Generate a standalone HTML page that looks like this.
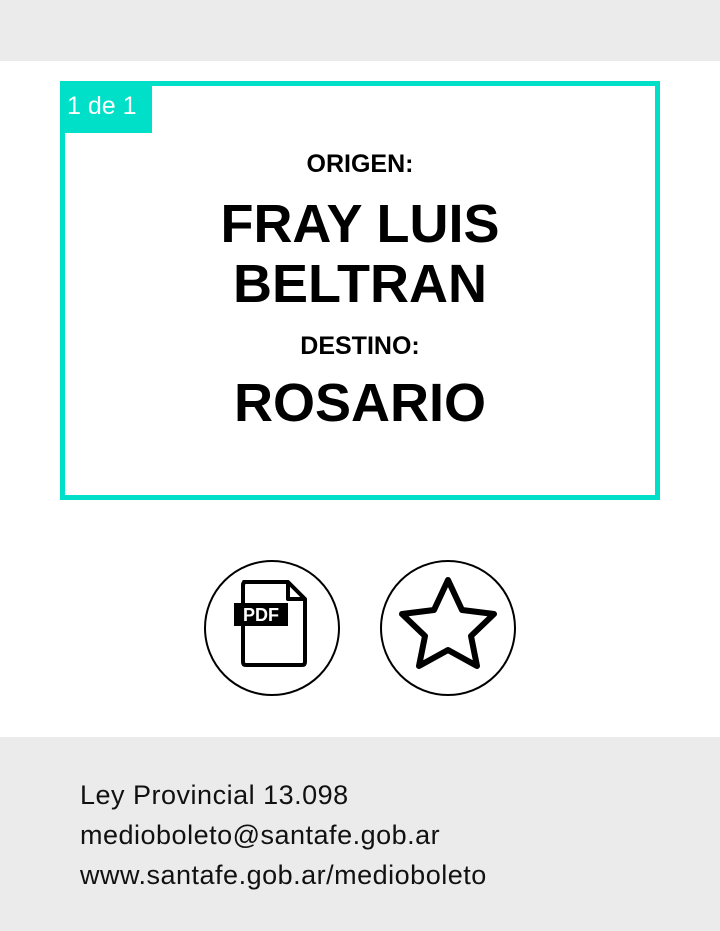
<!DOCTYPE html>
<html><head><style>
body{margin:0;width:720px;height:931px;background:#fff;font-family:"Liberation Sans",Arial,sans-serif;position:relative;overflow:hidden}
.top{position:absolute;left:0;top:0;width:720px;height:61px;background:#ebebeb}
.box{position:absolute;left:60px;top:81px;width:590px;height:409px;border:5px solid #00e0c8}
.badge{position:absolute;left:60px;top:81px;width:92px;height:52px;background:#00e0c8;color:#fff;font-size:25px;line-height:50px;text-indent:7px}
.t{position:absolute;left:0;width:720px;text-align:center;font-weight:bold;color:#000}
.foot{position:absolute;left:0;top:737px;width:720px;height:194px;background:#ebebeb}
.f{position:absolute;left:80px;font-size:27px;letter-spacing:0.5px;color:#111}
</style></head><body>
<div class="top"></div>
<div class="box"></div>
<div class="badge">1 de 1</div>
<div class="t" style="top:150px;font-size:25px">ORIGEN:</div>
<div class="t" style="top:194px;font-size:54px;line-height:60px">FRAY LUIS<br>BELTRAN</div>
<div class="t" style="top:332px;font-size:25px">DESTINO:</div>
<div class="t" style="top:373px;font-size:54px;line-height:60px">ROSARIO</div>
<svg style="position:absolute;left:0;top:0" width="720" height="931">
<circle cx="272" cy="628" r="67" fill="none" stroke="#000" stroke-width="2"/>
<circle cx="448" cy="628" r="67" fill="none" stroke="#000" stroke-width="2"/>
<path d="M244 582 H288 L305 599 V662 Q305 665 302 665 H246 Q243 665 243 662 V585 Q243 582 246 582 Z M288 582 V599 H305" fill="none" stroke="#000" stroke-width="4" stroke-linejoin="round"/>
<rect x="234" y="603" width="54" height="23" fill="#000"/>
<text x="261" y="621" font-family="Liberation Sans" font-weight="bold" font-size="18" fill="#fff" text-anchor="middle">PDF</text>
<path d="M448 580 L462 610 L494 614 L471 636 L477 666 L448 650 L419 666 L425 636 L402 614 L434 610 Z" fill="none" stroke="#000" stroke-width="6" stroke-linejoin="round"/>
</svg>
<div class="foot"></div>
<div class="f" style="top:780px">Ley Provincial 13.098</div>
<div class="f" style="top:820px">medioboleto@santafe.gob.ar</div>
<div class="f" style="top:860px">www.santafe.gob.ar/medioboleto</div>
</body></html>
